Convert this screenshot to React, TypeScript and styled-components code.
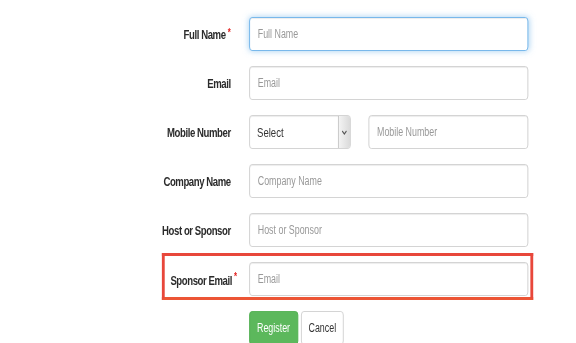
import React from "react";
import styled, { createGlobalStyle } from "styled-components";

// the source screenshot is squeezed horizontally; the form is laid out at
// natural width and narrowed as a whole
const SQUEEZE = 0.71;

const GlobalStyle = createGlobalStyle`
  html, body {
    margin: 0;
    overflow: hidden;
    background: #fff;
  }
  body {
    font-family: "Liberation Sans", Arial, sans-serif;
    color: #333;
  }
`;

const Page = styled.div`
  width: ${576 / SQUEEZE}px;
  transform: scaleX(${SQUEEZE});
  transform-origin: 0 0;
`;

const Form = styled.form`
  display: flex;
  flex-direction: column;
  gap: 15px;
  padding-top: 17px;
`;

const Row = styled.div`
  display: flex;
  align-items: center;
  gap: 26px;
`;

const Label = styled.label<{ $width: number }>`
  width: ${(p) => p.$width}px;
  flex: 0 0 auto;
  text-align: right;
  font-size: 13.5px;
  font-weight: 700;
  letter-spacing: -0.6px;
  color: #2b2b2b;
  white-space: nowrap;
`;

const Star = styled.span<{ $overhang?: boolean }>`
  display: inline-block;
  color: #e3201f;
  font-size: 11px;
  font-weight: 700;
  letter-spacing: 0;
  margin-left: 3px;
  margin-right: ${(p) => (p.$overhang ? "-9px" : "0")};
  vertical-align: ${(p) => (p.$overhang ? "5px" : "3px")};
`;

const Input = styled.input<{ $width?: number; $focused?: boolean }>`
  width: ${(p) => p.$width ?? 393}px;
  height: 34px;
  box-sizing: border-box;
  padding: 0 11px;
  border: 1px solid ${(p) => (p.$focused ? "#66afe9" : "#ccc")};
  border-radius: 4px;
  font-family: inherit;
  font-size: 12.5px;
  color: #555;
  outline: none;
  box-shadow: ${(p) =>
    p.$focused
      ? "inset 0 1px 1px rgba(0,0,0,.075), 0 0 8px rgba(102,175,233,.6)"
      : "inset 0 1px 1px rgba(0,0,0,.075)"};
  &::placeholder {
    color: #999;
  }
`;

const Mobile = styled.div`
  display: flex;
  gap: 25px;
`;

const SelectBox = styled.div`
  display: flex;
  width: 143px;
  height: 34px;
  box-sizing: border-box;
  border: 1px solid #ccc;
  border-radius: 4px;
  overflow: hidden;
  box-shadow: inset 0 1px 1px rgba(0,0,0,.075);
`;

const SelectText = styled.div`
  flex: 1;
  display: flex;
  align-items: center;
  padding-left: 10px;
  font-size: 13.5px;
  color: #333;
`;

const Arrow = styled.div`
  width: 16px;
  display: flex;
  align-items: center;
  justify-content: center;
  border-left: 1px solid #b5b5b5;
  background: linear-gradient(to right, #f4f4f4, #dadada);
`;

const Highlight = styled.div`
  width: ${371 / SQUEEZE}px;
  box-sizing: border-box;
  margin: -9px 0 0 228px;
  border: 3px solid #e8473b;
  border-left-width: 4px;
  border-right-width: 4px;
  border-bottom-color: #ec5535;
  padding: 6px 0 1px 0;
`;

const Buttons = styled.div`
  display: flex;
  gap: 4px;
  margin-left: 351px;
  margin-top: -4px;
`;

const Button = styled.button<{ $primary?: boolean }>`
  height: 34px;
  padding: 0 10px;
  border-radius: 4px;
  border: 1px solid ${(p) => (p.$primary ? "#4cae4c" : "#ccc")};
  background: ${(p) => (p.$primary ? "#5cb85c" : "#fff")};
  color: ${(p) => (p.$primary ? "#fff" : "#333")};
  font-family: inherit;
  font-size: 12.5px;
`;

export default function App() {
  return (
    <>
      <GlobalStyle />
      <Page>
        <Form>
          <Row>
            <Label $width={325}>
              Full Name<Star>*</Star>
            </Label>
            <Input placeholder="Full Name" $focused autoFocus />
          </Row>
          <Row>
            <Label $width={325}>Email</Label>
            <Input placeholder="Email" />
          </Row>
          <Row>
            <Label $width={325}>Mobile Number</Label>
            <Mobile>
              <SelectBox>
                <SelectText>Select</SelectText>
                <Arrow>
                  <svg width="8" height="5" viewBox="0 0 8 5">
                    <path d="M1 1 L4 4 L7 1" fill="none" stroke="#555" strokeWidth="1.4" />
                  </svg>
                </Arrow>
              </SelectBox>
              <Input placeholder="Mobile Number" $width={225} />
            </Mobile>
          </Row>
          <Row>
            <Label $width={325}>Company Name</Label>
            <Input placeholder="Company Name" />
          </Row>
          <Row>
            <Label $width={325}>Host or Sponsor</Label>
            <Input placeholder="Host or Sponsor" />
          </Row>
          <Highlight>
            <Row>
              <Label $width={93}>
                Sponsor Email<Star $overhang>*</Star>
              </Label>
              <Input placeholder="Email" />
            </Row>
          </Highlight>
          <Buttons>
            <Button type="button" $primary>
              Register
            </Button>
            <Button type="button">Cancel</Button>
          </Buttons>
        </Form>
      </Page>
    </>
  );
}
